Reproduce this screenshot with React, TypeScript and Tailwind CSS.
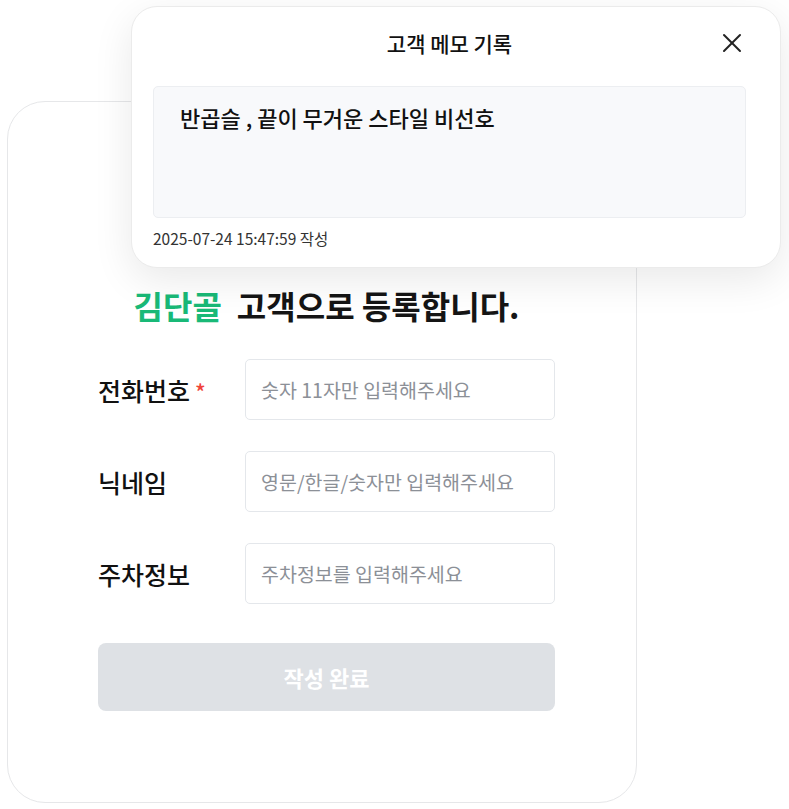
import React from "react";

const font = { fontFamily: '"Noto Sans CJK KR", "Noto Sans", sans-serif' };

function Field({ label, placeholder, required = false }: { label: string; placeholder: string; required?: boolean }) {
  return (
    <div className="flex items-center">
      <div className="w-[147px] flex items-center text-[25px] leading-[32px] font-medium text-[#111]">
        <span>{label}</span>
        {required && <span className="ml-[5px] text-[22px] leading-[22px] text-[#f0443a] mt-[2px]">*</span>}
      </div>
      <div className="flex-1 h-[61px] border border-[#e4e7eb] rounded-[5px] flex items-center pl-[15px] text-[19.5px] text-[#8c9097]">
        {placeholder}
      </div>
    </div>
  );
}

function CloseIcon() {
  return (
    <svg width="20" height="20" viewBox="0 0 20 20" fill="none" stroke="#222" strokeWidth="2" strokeLinecap="round">
      <path d="M2 2L18 18" />
      <path d="M18 2L2 18" />
    </svg>
  );
}

export default function App() {
  return (
    <div className="relative w-[789px] h-[809px] bg-white overflow-hidden" style={font}>
      {/* back card: register form */}
      <div className="ml-[7px] pt-[101px]">
        <div className="w-[630px] h-[702px] rounded-[38px] border-[1.5px] border-[#e6e7e9] bg-white pl-[90px] pr-[81px] pt-[183px]">
          <h2 className="text-center text-[32px] leading-[40px] font-bold text-[#151515] whitespace-nowrap">
            <span className="text-[#19b977]">김단골</span>
            <span className="ml-[15px]">고객으로 등록합니다.</span>
          </h2>
          <div className="mt-[34px] flex flex-col gap-[31px]">
            <Field label="전화번호" placeholder="숫자 11자만 입력해주세요" required />
            <Field label="닉네임" placeholder="영문/한글/숫자만 입력해주세요" />
            <Field label="주차정보" placeholder="주차정보를 입력해주세요" />
          </div>
          <button className="mt-[39px] w-full h-[68px] rounded-[8px] bg-[#dee1e5] text-white text-[22px] font-bold">
            작성 완료
          </button>
        </div>
      </div>

      {/* memo popup */}
      <div className="absolute left-[131px] top-[6px] w-[650px] h-[262px] rounded-[26px] border border-[#ebebeb] bg-white shadow-[0_12px_40px_rgba(0,0,0,0.09)] pl-[21px] pt-[23px]">
        <div className="relative w-[593px] flex justify-center">
          <span className="text-[21px] leading-[26px] font-medium text-[#111]">고객 메모 기록</span>
          <button className="absolute right-[4px] top-[3px]">
            <CloseIcon />
          </button>
        </div>
        <div className="mt-[30px] w-[593px] h-[132px] rounded-[5px] border border-[#eceef1] bg-[#f8f9fb] pl-[26px] pt-[16px] text-[22px] leading-[28px] font-medium text-[#111]">
          반곱슬 , 끝이 무거운 스타일 비선호
        </div>
        <div className="mt-[11px] text-[15.5px] leading-[18px] text-[#333]">2025-07-24 15:47:59 작성</div>
      </div>
    </div>
  );
}
